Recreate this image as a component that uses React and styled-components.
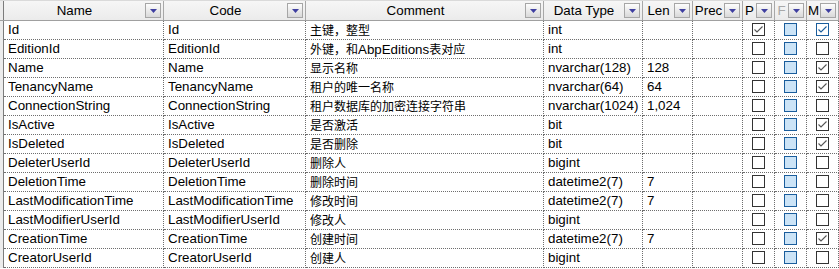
import React from 'react';
import styled, { createGlobalStyle } from 'styled-components';

const Global = createGlobalStyle`
  html, body { margin: 0; padding: 0; background: #fff; overflow: hidden; }
  body {
    font-family: "Liberation Sans", Arial, "Noto Sans CJK SC", sans-serif;
    font-size: 13.33px;
    color: #000;
  }
`;

const COLS = '4px 160px 142px 238px 99px 50px 50px 32px 32px 32px';

const Table = styled.div`
  width: 839px;
  display: flex;
  flex-direction: column;
`;

const HeaderRow = styled.div`
  display: grid;
  grid-template-columns: ${COLS};
  height: 21px;
  box-sizing: border-box;
  background: linear-gradient(#f6f6f6, #ebebeb);
  border-top: 1px solid #dadada;
  border-bottom: 1px solid #a0a0a0;
`;

const Strip = styled.div`
  box-sizing: border-box;
  background: #ececec;
  border-right: 1px solid #7c7c7c;
`;

const HeadCell = styled.div`
  display: flex;
  align-items: center;
  min-width: 0;
  box-sizing: border-box;
  border-right: 1px solid #a8a8a8;
  padding-right: 2px;
`;

const HeadLabel = styled.span`
  flex: 1;
  min-width: 0;
  overflow: hidden;
  white-space: nowrap;
  text-align: center;
  color: ${p => (p.$disabled ? '#a8a8a8' : '#000')};
  text-overflow: clip;
`;

const DropBtn = styled.span`
  flex: none;
  width: 16px;
  height: 15px;
  box-sizing: border-box;
  border: 1px solid #a6a6a6;
  background: linear-gradient(#fdfdfd, #d9d9d9);
  display: flex;
  align-items: center;
  justify-content: center;
`;

const Row = styled.div`
  display: grid;
  grid-template-columns: ${COLS};
  height: 19px;
`;

const Cell = styled.div`
  box-sizing: border-box;
  min-width: 0;
  height: 19px;
  line-height: 18px;
  padding-left: ${p => (p.$first ? '4px' : '4px')};
  white-space: nowrap;
  overflow: hidden;
  border-bottom: 1px dotted #6e6e6e;
  border-right: 1px dotted #6e6e6e;
`;

const BoxCell = styled.div`
  box-sizing: border-box;
  height: 19px;
  display: flex;
  align-items: center;
  justify-content: center;
  border-bottom: 1px dotted #6e6e6e;
  border-right: 1px dotted #6e6e6e;
  padding-bottom: 1px;
`;

const Box = styled.span`
  width: 13px;
  height: 13px;
  box-sizing: border-box;
  border: 1px solid ${p => (p.$blue ? '#1a5d9c' : '#333333')};
  background: ${p => (p.$fill ? '#cce4f7' : '#ffffff')};
  display: flex;
  align-items: center;
  justify-content: center;
`;

const Cjk = styled.span`
  font-family: "Noto Sans CJK SC", sans-serif;
  font-size: 12px;
`;

const Triangle = () => (
  <svg width="7" height="4" viewBox="0 0 7 4">
    <polygon points="0,0 7,0 3.5,4" fill="#3f3fa0" />
  </svg>
);

const Check = ({ color }) => (
  <svg width="11" height="11" viewBox="0 0 11 11">
    <polyline points="1.5,5.5 4,8 9.5,2.5" fill="none" stroke={color} strokeWidth="1.1" />
  </svg>
);

const headers = [
  { t: 'Name' },
  { t: 'Code' },
  { t: 'Comment' },
  { t: 'Data Type' },
  { t: 'Len' },
  { t: 'Prec' },
  { t: 'P' },
  { t: 'F', disabled: true },
  { t: 'M' },
];

const rows = [
  ['Id', 'Id', '主键，整型', 'int', '', true, true],
  ['EditionId', 'EditionId', '外键，和AbpEditions表对应', 'int', '', false, false],
  ['Name', 'Name', '显示名称', 'nvarchar(128)', '128', false, true],
  ['TenancyName', 'TenancyName', '租户的唯一名称', 'nvarchar(64)', '64', false, true],
  ['ConnectionString', 'ConnectionString', '租户数据库的加密连接字符串', 'nvarchar(1024)', '1,024', false, false],
  ['IsActive', 'IsActive', '是否激活', 'bit', '', false, true],
  ['IsDeleted', 'IsDeleted', '是否删除', 'bit', '', false, true],
  ['DeleterUserId', 'DeleterUserId', '删除人', 'bigint', '', false, false],
  ['DeletionTime', 'DeletionTime', '删除时间', 'datetime2(7)', '7', false, false],
  ['LastModificationTime', 'LastModificationTime', '修改时间', 'datetime2(7)', '7', false, false],
  ['LastModifierUserId', 'LastModifierUserId', '修改人', 'bigint', '', false, false],
  ['CreationTime', 'CreationTime', '创建时间', 'datetime2(7)', '7', false, true],
  ['CreatorUserId', 'CreatorUserId', '创建人', 'bigint', '', false, false],
];

const splitCjk = (s) =>
  s.split(/([^\x00-\x7f]+)/).filter(Boolean).map((part, i) =>
    /[^\x00-\x7f]/.test(part) ? <Cjk key={i}>{part}</Cjk> : <span key={i}>{part}</span>
  );

export default function App() {
  return (
    <>
      <Global />
      <Table>
        <HeaderRow>
          <Strip />
          {headers.map(h => (
            <HeadCell key={h.t}>
              <HeadLabel $disabled={h.disabled}>{h.t}</HeadLabel>
              <DropBtn><Triangle /></DropBtn>
            </HeadCell>
          ))}
        </HeaderRow>
        {rows.map((r, i) => (
          <Row key={r[0]}>
            <Strip />
            <Cell>{r[0]}</Cell>
            <Cell>{r[1]}</Cell>
            <Cell>{splitCjk(r[2])}</Cell>
            <Cell>{r[3]}</Cell>
            <Cell>{r[4]}</Cell>
            <Cell />
            <BoxCell>
              <Box>{r[5] && <Check color="#555" />}</Box>
            </BoxCell>
            <BoxCell>
              <Box $fill $blue />
            </BoxCell>
            <BoxCell>
              <Box $blue={i === 0}>{r[6] && <Check color={i === 0 ? '#1a5d9c' : '#555'} />}</Box>
            </BoxCell>
          </Row>
        ))}
      </Table>
    </>
  );
}
